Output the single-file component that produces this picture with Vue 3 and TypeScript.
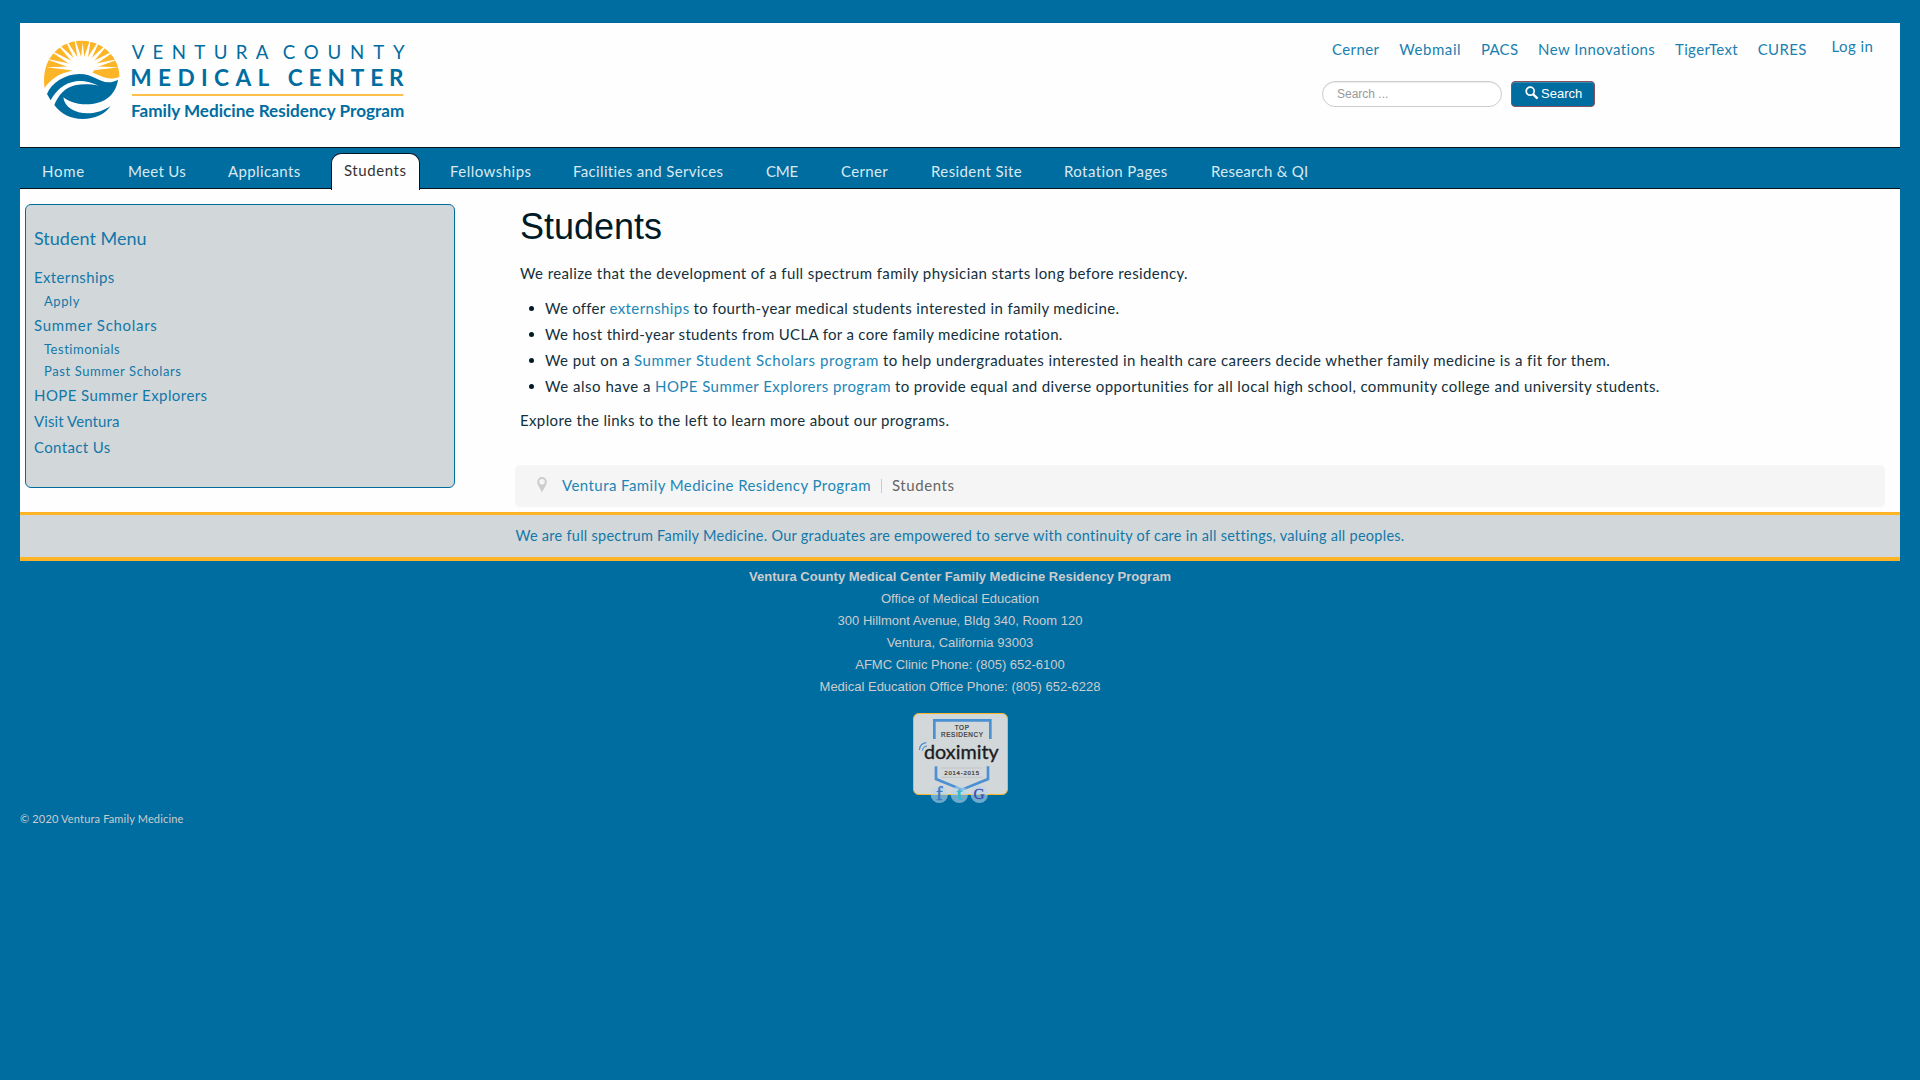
<script setup lang="ts">
interface Item { label: string; w: number; pitch?: number; sub?: boolean; active?: boolean }
interface Segment { text: string; w: number; link?: boolean }

// Spreads the letters of a single line so that it takes the given measure.
const vFit = {
  mounted(el: HTMLElement, binding: { value: number }) {
    const count = (el.textContent ?? '').length
    const natural = el.getBoundingClientRect().width
    if (count > 0) el.style.letterSpacing = `${(binding.value - natural) / count}px`
  },
}

const topLinks: Item[] = [
  { label: 'Cerner', w: 47.5 },
  { label: 'Webmail', w: 62 },
  { label: 'PACS', w: 37.5 },
  { label: 'New Innovations', w: 117.5 },
  { label: 'TigerText', w: 63 },
  { label: 'CURES', w: 49 },
]

const mainNav: Item[] = [
  { label: 'Home', w: 43, pitch: 86 },
  { label: 'Meet Us', w: 58, pitch: 100 },
  { label: 'Applicants', w: 72.5, pitch: 103 },
  { label: 'Students', w: 62.5, pitch: 119, active: true },
  { label: 'Fellowships', w: 81.5, pitch: 123 },
  { label: 'Facilities and Services', w: 150.5, pitch: 193 },
  { label: 'CME', w: 32, pitch: 75 },
  { label: 'Cerner', w: 47, pitch: 90 },
  { label: 'Resident Site', w: 91, pitch: 133 },
  { label: 'Rotation Pages', w: 104, pitch: 147 },
  { label: 'Research & QI', w: 97.5, pitch: 100 },
]

const sideMenu: Item[] = [
  { label: 'Externships', w: 80.5 },
  { label: 'Apply', w: 36, sub: true },
  { label: 'Summer Scholars', w: 123.5 },
  { label: 'Testimonials', w: 76.5, sub: true },
  { label: 'Past Summer Scholars', w: 137.5, sub: true },
  { label: 'HOPE Summer Explorers', w: 173.5 },
  { label: 'Visit Ventura', w: 85.5 },
  { label: 'Contact Us', w: 76.5 },
]

const bullets: Segment[][] = [
  [
    { text: 'We offer', w: 60 },
    { text: 'externships', w: 80, link: true },
    { text: 'to fourth-year medical students interested in family medicine.', w: 426 },
  ],
  [{ text: 'We host third-year students from UCLA for a core family medicine rotation.', w: 518 }],
  [
    { text: 'We put on a', w: 85 },
    { text: 'Summer Student Scholars program', w: 245, link: true },
    { text: 'to help undergraduates interested in health care careers decide whether family medicine is a fit for them.', w: 727 },
  ],
  [
    { text: 'We also have a', w: 106 },
    { text: 'HOPE Summer Explorers program', w: 236, link: true },
    { text: 'to provide equal and diverse opportunities for all local high school, community college and university students.', w: 765 },
  ],
]

const address: string[] = [
  'Office of Medical Education',
  '300 Hillmont Avenue, Bldg 340, Room 120',
  'Ventura, California 93003',
  'AFMC Clinic Phone: (805) 652-6100',
  'Medical Education Office Phone: (805) 652-6228',
]

const rays: number[] = [-90, -74, -58, -43, -28, -14, -2, -106, -122, -137, -152, -166, -178]
function ray(angle: number): string {
  const a = (angle * Math.PI) / 180
  const len = Math.abs(Math.cos(a)) * 106 + Math.abs(Math.sin(a)) * 70
  const nx = -Math.sin(a) * 7
  const ny = Math.cos(a) * 7
  const cx = 248
  const cy = 206
  const bx = cx + Math.cos(a) * 22
  const by = cy + Math.sin(a) * 18
  return `${bx + nx},${by + ny} ${cx + Math.cos(a) * len},${cy + Math.sin(a) * (len + 8)} ${bx - nx},${by - ny}`
}
</script>

<template>
  <div class="page">
    <div class="container">
      <header class="header">
        <svg class="logo" viewBox="120 105 1110 270" width="370" height="90">
          <path fill="#fdb528" d="M134 264 C129 232 134 200 150 174 C172 139 207 122 245 122 C284 122 320 141 340 172 C352 190 359 212 358 230 C335 241 312 236 292 226 C262 211 222 209 190 220 C166 229 148 244 134 264Z" />
          <ellipse cx="248" cy="206" rx="34" ry="25" fill="#fff" />
          <polygon v-for="a in rays" :key="a" :points="ray(a)" fill="#fff" />
          <path fill="#fff" d="M134 268 C150 240 185 217 225 211 C270 205 300 234 330 236 C345 237 352 235 358 231 L358 244 L240 260 L140 290Z" />
          <path fill="#006da1" d="M141 282 C155 247 195 223 238 222 C280 222 298 247 325 247 C337 247 346 243 354 239 C350 265 338 283 322 295 C300 312 265 316 235 311 C215 307 200 301 190 292 C193 322 225 340 262 340 C290 340 314 330 332 318 C315 342 285 357 248 357 C213 357 183 342 163 315 C174 288 194 263 225 256 C250 251 274 253 296 257 C272 246 250 241 228 244 C192 249 168 272 152 301Z" />
          <g fill="#006da1" font-family="Lato, 'Open Sans', sans-serif">
            <text x="395" y="177" font-size="56" font-weight="400" textLength="410">VENTURA</text>
            <text x="848" y="177" font-size="56" font-weight="400" textLength="366">COUNTY</text>
            <text x="391" y="258" font-size="68" font-weight="700" textLength="417">MEDICAL</text>
            <text x="863" y="258" font-size="68" font-weight="700" textLength="348">CENTER</text>
            <text x="393" y="350" font-size="51" font-weight="700" textLength="820" lengthAdjust="spacingAndGlyphs">Family Medicine Residency Program</text>
          </g>
          <rect x="396" y="282" width="814" height="6" fill="#ffc04a" />
        </svg>
        <div class="tools">
          <nav class="top-links">
            <a v-for="l in topLinks" :key="l.label" v-fit="l.w">{{ l.label }}</a>
            <a v-fit="42" class="login">Log in</a>
          </nav>
          <form class="search">
            <div class="field">Search ...</div>
            <div class="button">
              <svg width="14" height="14" viewBox="0 0 14 14">
                <circle cx="5.2" cy="5.2" r="4" fill="none" stroke="#fff" stroke-width="1.7" />
                <path d="M8 8.2 L12.6 12.6" stroke="#fff" stroke-width="2.3" />
              </svg>
              <span>Search</span>
            </div>
          </form>
        </div>
      </header>

      <nav class="main-nav">
        <div v-for="(n, i) in mainNav" :key="i" class="nav-item" :class="{ active: n.active }" :style="{ width: n.pitch + 'px' }">
          <a><span v-fit="n.w">{{ n.label }}</span></a>
        </div>
      </nav>

      <div class="body">
        <aside class="sidebar">
          <h3><span v-fit="112.5">Student Menu</span></h3>
          <ul>
            <li v-for="s in sideMenu" :key="s.label" :class="{ sub: s.sub }"><a v-fit="s.w">{{ s.label }}</a></li>
          </ul>
        </aside>
        <main class="main">
          <article>
            <h1>Students</h1>
            <p><span v-fit="668">We realize that the development of a full spectrum family physician starts long before residency.</span></p>
            <ul>
              <li v-for="(b, i) in bullets" :key="i">
                <span v-for="(s, j) in b" :key="j" v-fit="s.w" :class="{ link: s.link }">{{ s.text }}</span>
              </li>
            </ul>
            <p><span v-fit="429">Explore the links to the left to learn more about our programs.</span></p>
          </article>
          <div class="breadcrumb">
            <svg width="10" height="16" viewBox="0 0 10 16">
              <path fill="#ccc" fill-rule="evenodd" d="M5 0 A4.8 4.8 0 0 1 9.8 4.8 C9.8 8 6.6 11.5 5 15.6 C3.4 11.5 .2 8 .2 4.8 A4.8 4.8 0 0 1 5 0Z M5 2 A2.8 2.8 0 1 0 5 7.6 A2.8 2.8 0 1 0 5 2Z" />
            </svg>
            <a v-fit="309">Ventura Family Medicine Residency Program</a>
            <i class="divider"></i>
            <span v-fit="62.5">Students</span>
          </div>
        </main>
      </div>

      <div class="motto"><span v-fit="889">We are full spectrum Family Medicine. Our graduates are empowered to serve with continuity of care in all settings, valuing all peoples.</span></div>
    </div>

    <footer class="footer">
      <strong>Ventura County Medical Center Family Medicine Residency Program</strong>
      <div v-for="a in address" :key="a">{{ a }}</div>
      <div class="badge">
        <svg width="96" height="92" viewBox="67 69 288 276">
          <rect x="71.5" y="70.5" width="282" height="243" rx="16" fill="#d2d7da" stroke="#fdb528" stroke-width="3" />
          <path d="M134 147 V91 H302 V147" fill="none" stroke="#4a90d2" stroke-width="8" />
          <path d="M139 229 V267 L217 299 L295 267 V229" fill="none" stroke="#4a90d2" stroke-width="8" />
          <path d="M89 180 Q91 160 110 158 M98 182 Q100 170 112 168" fill="none" stroke="#4a90d2" stroke-width="3.5" />
          <g font-family="'Liberation Sans', sans-serif" fill="#333" stroke="#333" stroke-width=".6">
            <text x="195" y="120" font-size="19" textLength="43">TOP</text>
            <text x="154" y="141" font-size="19" textLength="126">RESIDENCY</text>
            <text x="164" y="254" font-size="18" textLength="104">2014-2015</text>
          </g>
          <path d="M155 234 H278 M155 262 H278" stroke="#b8bdc0" stroke-width="2" />
          <text x="103" y="207" font-family="Lato, sans-serif" font-size="55" fill="#1c1c1e" stroke="#1c1c1e" stroke-width="1" textLength="224" lengthAdjust="spacingAndGlyphs">doximity</text>
          <g fill="#b9d6ea" fill-opacity=".6">
            <circle cx="149" cy="313" r="26" />
            <circle cx="209" cy="313" r="26" />
            <circle cx="269" cy="313" r="26" />
          </g>
          <g font-family="'Liberation Serif', serif" text-anchor="middle">
            <text x="149" y="331" font-size="56" fill="#3f76c4" stroke="#3f76c4" stroke-width="1.5">f</text>
            <text x="209" y="330" font-size="56" fill="#35b9cf" font-weight="700">t</text>
            <text x="268" y="328" font-size="46" fill="#3c49ae" stroke="#3c49ae">G</text>
          </g>
        </svg>
      </div>
      <div class="copyright"><span v-fit="163.5">© 2020 Ventura Family Medicine</span></div>
    </footer>
  </div>
</template>

<style>
body {
  background: #006da1;
}
</style>

<style scoped>
* {
  box-sizing: border-box;
}
.page {
  padding: 23px 20px 0;
  font-family: Lato, 'Open Sans', sans-serif;
  font-size: 15px;
  line-height: 26px;
  color: #12303d;
  white-space: nowrap;
}
a,
span {
  display: inline-block;
}
ul {
  margin: 0;
  padding: 0;
  list-style: none;
}
.container {
  background: #fefefe;
}
.header {
  display: flex;
  justify-content: space-between;
  height: 124px;
  padding: 12px 0 0 20px;
}
.logo {
  overflow: visible;
}
.tools {
  width: 578px;
}
.top-links {
  display: flex;
  gap: 19.7px;
  height: 46px;
  padding: 1px 0 0 10px;
}
.top-links a {
  color: #1a80b0;
}
.top-links .login {
  margin: -3px 0 0 5px;
}
.search {
  display: flex;
  gap: 9px;
  font-family: 'Liberation Sans', sans-serif;
}
.field {
  width: 180px;
  height: 26px;
  padding-left: 14px;
  border: 1px solid #ccc;
  border-radius: 13px;
  background: #fff;
  box-shadow: inset 0 1px 1px rgba(0, 0, 0, 0.075);
  color: #999;
  font-size: 12px;
  line-height: 24px;
}
.button {
  display: flex;
  gap: 2px;
  width: 84px;
  height: 26px;
  padding: 4px 0 0 13px;
  border: 1px solid #87525a;
  border-radius: 4px;
  background: #006da1;
  box-shadow: inset 0 1px 0 rgba(255, 255, 255, 0.2);
  color: #fff;
  font-size: 13px;
  line-height: 16px;
}
.button svg {
  flex: none;
}
.main-nav {
  display: flex;
  height: 42px;
  padding-left: 22px;
  border-top: 1px solid #00151f;
  border-bottom: 1px solid #00151f;
  background: #006da1;
}
.nav-item {
  flex: none;
  height: 42px;
  padding-top: 10px;
}
.nav-item a {
  color: #d9e9f1;
}
.nav-item.active {
  padding-top: 5px;
}
.nav-item.active a {
  height: 37px;
  padding: 3px 12px 0;
  border: 1px solid #00151f;
  border-bottom: 0;
  border-radius: 10px 10px 0 0;
  background: #fefefe;
  color: #333;
}
.body {
  display: flex;
  justify-content: space-between;
  height: 323px;
  padding: 15px 15px 0 5px;
}
.sidebar {
  width: 430px;
  height: 284px;
  padding: 0 8px;
  border: 1px solid #006da1;
  border-radius: 6px;
  background: #d2d7da;
  color: #1377a8;
}
.sidebar h3 {
  margin: 20px 0 13px;
  font-size: 18px;
  font-weight: 400;
  line-height: 26px;
}
.sidebar .sub {
  height: 22px;
  padding-left: 10px;
  font-size: 13px;
  line-height: 22px;
}
.main {
  width: 1370px;
}
article {
  height: 261px;
  padding-left: 5px;
}
h1 {
  margin: 0;
  padding-top: 3px;
  color: #001a26;
  font: 400 36px/40px 'Liberation Sans', sans-serif;
}
p {
  margin: 13px 0 9px;
}
article ul {
  padding-left: 25px;
}
article li {
  position: relative;
  display: flex;
  gap: 4px;
}
article li::before {
  content: '';
  position: absolute;
  left: -16px;
  top: 11px;
  width: 5px;
  height: 5px;
  border-radius: 50%;
  background: #001a26;
}
article ul + p {
  margin-top: 8px;
}
.link,
.breadcrumb a {
  color: #1d86b7;
}
.breadcrumb {
  display: flex;
  height: 42px;
  padding: 7px 0 0 22px;
  border-radius: 5px;
  background: #f5f5f5;
  color: #666;
}
.breadcrumb svg {
  margin: 5px 15px 0 0;
}
.divider {
  width: 1px;
  height: 14px;
  margin: 7px 10px 0;
  background: #ccc;
}
.motto {
  height: 49px;
  padding-top: 8px;
  border-top: 3px solid #ffb427;
  border-bottom: 4px solid #ffb427;
  background: #d2d7da;
  color: #1377a8;
  font-size: 14.5px;
  text-align: center;
}
.footer {
  padding-top: 5px;
  color: #ccc;
  font: 13px/22px 'Liberation Sans', sans-serif;
  text-align: center;
}
.footer strong {
  display: block;
}
.badge {
  height: 95px;
  margin-top: 15px;
}
.badge svg {
  display: block;
  margin: 0 auto;
}
.copyright {
  font-family: Lato, sans-serif;
  font-size: 11px;
  text-align: left;
}
</style>
